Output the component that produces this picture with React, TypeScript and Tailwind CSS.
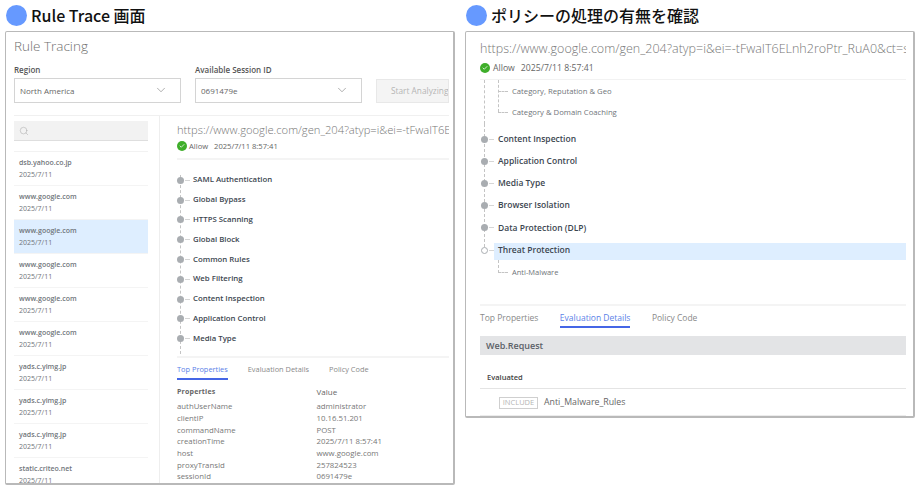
import React from 'react';
import { ChevronDown, Search, Check } from 'lucide-react';

const sessions = [
  { host: 'dsb.yahoo.co.jp' },
  { host: 'www.google.com' },
  { host: 'www.google.com', active: true },
  { host: 'www.google.com' },
  { host: 'www.google.com' },
  { host: 'www.google.com' },
  { host: 'yads.c.yimg.jp' },
  { host: 'yads.c.yimg.jp' },
  { host: 'yads.c.yimg.jp' },
  { host: 'static.criteo.net' },
];

const leftRules = ['SAML Authentication', 'Global Bypass', 'HTTPS Scanning', 'Global Block', 'Common Rules', 'Web Filtering', 'Content Inspection', 'Application Control', 'Media Type'];
const rightRules = ['Content Inspection', 'Application Control', 'Media Type', 'Browser Isolation', 'Data Protection (DLP)'];

const properties = [
  ['authUserName', 'administrator'],
  ['clientIP', '10.16.51.201'],
  ['commandName', 'POST'],
  ['creationTime', '2025/7/11 8:57:41'],
  ['host', 'www.google.com'],
  ['proxyTransId', '257824523'],
  ['sessionId', '0691479e'],
];

const Heading = ({ title }: { title: string }) => (
  <div className="h-[31px] flex items-center gap-[4px] pl-[1px] pb-[1px]">
    <div className="w-[21px] h-[21px] rounded-full bg-[#6699ff]" />
    <h2 className="text-[16px] leading-[22px] font-medium text-[#111] font-['Noto_Sans_CJK_JP',sans-serif]">{title}</h2>
  </div>
);

const SelectBox = ({ label, value }: { label: string; value: string }) => (
  <div className="w-[167px]">
    <div className="h-[16px] text-[8px] leading-[15px] font-semibold text-[#555]">{label}</div>
    <div className="h-[25px] border border-[#d4d4d4] flex items-center justify-between pl-[5px] pr-[12px] text-[8px] text-[#666]">
      {value}
      <ChevronDown size={14} strokeWidth={0.9} className="text-[#666] mb-[2px]" />
    </div>
  </div>
);

const Status = ({ small }: { small?: boolean }) => (
  <div className={`flex items-center text-[#666] leading-none ${small ? 'text-[7.6px]' : 'text-[8.7px]'}`}>
    <span className={`w-[10px] h-[10px] rounded-full bg-[#3fae2a] flex items-center justify-center ${small ? 'mr-[2px]' : 'mr-[3px]'}`}>
      <Check size={6} strokeWidth={3} className="text-white" />
    </span>
    <span>Allow</span>
    <span className="ml-[6px]">2025/7/11 8:57:41</span>
  </div>
);

const Rule = ({ name, hollow, small }: { name: string; hollow?: boolean; small?: boolean }) => (
  <div className="flex items-center h-full">
    <span className={`w-[7px] h-[7px] rounded-full shrink-0 relative z-10 ${hollow ? 'bg-white border border-[#a9adb1]' : 'bg-[#a9adb1]'}`} />
    <span className="w-[5px] ml-[1px] shrink-0 border-t border-dashed border-[#d6d6d6]" />
    <span className={`font-semibold text-[#3c4650] whitespace-nowrap ${small ? 'text-[7.8px] ml-[3px]' : 'text-[8.5px] ml-[4px]'}`}>{name}</span>
  </div>
);

const Tabs = ({ active, small }: { active: string; small?: boolean }) => (
  <div className={`flex text-[#8a8a8a] ${small ? 'gap-[20px] text-[7.4px]' : 'gap-[21.5px] text-[8.5px]'}`}>
    {['Top Properties', 'Evaluation Details', 'Policy Code'].map(t => (
      <div key={t} className={`h-[17px] leading-[13px] ${t === active ? 'text-[#5b7fe8] border-b-2 border-[#4566e6]' : ''}`}>{t}</div>
    ))}
  </div>
);

const App: React.FC = () => {
  return (
    <div className="w-[920px] h-[490px] bg-white flex gap-[10px] pl-[5px] overflow-hidden font-['Open_Sans',sans-serif]">
      <div className="w-[450px]">
        <Heading title="Rule Trace 画面" />
        <div className="h-[454px] border border-[#b9b9b9] border-b-2 border-r-2 rounded-[2px] pl-[8px] pr-[4px] overflow-hidden flex flex-col">
          <div className="h-[28px] pt-[2px] text-[13.5px] leading-[24px] font-light text-[#6f6f6f]">Rule Tracing</div>
          <div className="flex gap-[14px] items-end mt-[2px]">
            <SelectBox label="Region" value="North America" />
            <SelectBox label="Available Session ID" value="0691479e" />
            <div className="w-[73px] h-[24px] shrink-0 bg-[#f4f4f4] border border-[#e8e8e8] pl-[14px] flex items-center text-[8.3px] text-[#b4b4b4] whitespace-nowrap overflow-hidden">Start Analyzing</div>
          </div>
          <div className="flex-1 min-h-0 flex mt-[12px] border-t border-[#f0f0f0]">
            <div className="w-[146px] shrink-0 border-r border-[#eeeeee] pr-[11px] pt-[5px] overflow-hidden">
              <div className="h-[20px] bg-[#f2f2f2] border-b border-[#dedede] flex items-center pl-[5px]">
                <Search size={10} strokeWidth={1} className="text-[#9a9a9a]" />
              </div>
              <div className="mt-[10px] border-t border-[#f2f2f2]">
                {sessions.map((s, i) => (
                  <div key={i} className={`h-[34px] pl-[5px] pt-[5px] border-b border-[#f4f4f4] ${s.active ? 'bg-[#deeeff]' : ''}`}>
                    <div className="text-[7px] leading-[12px] font-semibold text-[#70757a]">{s.host}</div>
                    <div className="text-[7px] leading-[12px] text-[#70757a]">2025/7/11</div>
                  </div>
                ))}
              </div>
            </div>
            <div className="flex-1 min-w-0 pl-[17px] overflow-hidden flex flex-col">
              <div className="mt-[4px] h-[20px] text-[11.2px] leading-[20px] font-light text-[#777] whitespace-nowrap overflow-hidden">https://www.google.com/gen_204?atyp=i&amp;ei=-tFwaIT6ELnh2roPtr_RuA0&amp;ct=slh</div>
              <div className="mt-[3px]"><Status small /></div>
              <div className="mt-[7px] h-[2px] bg-[#f4f4f4] shrink-0" />
              <div className="relative mt-[10px] h-[186px] shrink-0">
                <div className="absolute left-[3px] top-[5px] bottom-[2px] border-l border-dashed border-[#c4c4c4]" />
                {leftRules.map(r => (
                  <div key={r} className="h-[19.8px]"><Rule name={r} small /></div>
                ))}
              </div>
              <div className="h-[2px] bg-[#f4f4f4] shrink-0" />
              <div className="mt-[5px]"><Tabs active="Top Properties" small /></div>
              <div className="flex items-center h-[15px] mt-[5px] text-[#666]">
                <div className="w-[139.5px] text-[7px] font-bold tracking-[0.2px]">Properties</div>
                <div className="text-[8px]">Value</div>
              </div>
              <div className="mt-[2px]">
                {properties.map(([k, v]) => (
                  <div key={k} className="flex h-[11.7px] items-center text-[7.8px] text-[#777]">
                    <div className="w-[139.5px]">{k}</div>
                    <div>{v}</div>
                  </div>
                ))}
              </div>
            </div>
          </div>
        </div>
      </div>

      <div className="w-[450px]">
        <Heading title="ポリシーの処理の有無を確認" />
        <div className="h-[387px] border border-[#b9b9b9] border-b-2 border-r-2 rounded-[2px] pl-[14px] pr-[7px] overflow-hidden flex flex-col">
          <div className="mt-[6px] h-[22px] text-[12.5px] leading-[22px] font-light text-[#777] whitespace-nowrap overflow-hidden">https://www.google.com/gen_204?atyp=i&amp;ei=-tFwaIT6ELnh2roPtr_RuA0&amp;ct=slh</div>
          <div className="mt-[4px]"><Status /></div>
          <div className="mt-[6px] h-[1px] bg-[#f2f2f2] shrink-0" />
          <div className="relative h-[44px] shrink-0">
            <div className="absolute left-[4px] top-0 bottom-0 border-l border-dashed border-[#c4c4c4]" />
            <div className="absolute left-[18px] top-0 h-[32px] border-l border-dashed border-[#c4c4c4]" />
            <div className="ml-[18px] flex items-center h-[21px] pt-[2px]">
              <span className="w-[10px] border-t border-dashed border-[#c4c4c4] mr-[4px]" />
              <span className="text-[7.7px] text-[#70757a]">Category, Reputation &amp; Geo</span>
            </div>
            <div className="ml-[18px] mt-[1px] flex items-center h-[21px]">
              <span className="w-[10px] border-t border-dashed border-[#c4c4c4] mr-[4px]" />
              <span className="text-[7.7px] text-[#70757a]">Category &amp; Domain Coaching</span>
            </div>
          </div>
          <div className="relative">
            <div className="absolute left-[4px] top-0 bottom-[8px] border-l border-dashed border-[#c4c4c4]" />
            <div className="h-[4px]" />
            {rightRules.map(r => (
              <div key={r} className="h-[22.2px] pl-[1px]"><Rule name={r} /></div>
            ))}
            <div className="h-[17px] mt-[4px] flex items-start pl-[1px] relative">
              <span className="absolute left-[14px] right-0 top-0 bottom-0 bg-[#deeeff]" />
              <div className="relative h-[15px]"><Rule name="Threat Protection" hollow /></div>
            </div>
          </div>
          <div className="relative h-[44px] shrink-0">
            <div className="absolute left-[18px] top-0 h-[13px] border-l border-dashed border-[#c4c4c4]" />
            <div className="ml-[18px] flex items-center h-[25px]">
              <span className="w-[10px] border-t border-dashed border-[#c4c4c4] mr-[4px]" />
              <span className="text-[7.5px] text-[#70757a]">Anti-Malware</span>
            </div>
          </div>
          <div className="h-[2px] bg-[#f4f4f4] shrink-0" />
          <div className="mt-[5px]"><Tabs active="Evaluation Details" /></div>
          <div className="mt-[8px] h-[19px] bg-[#e3e4e6] pl-[6px] flex items-center text-[9px] font-semibold text-[#5b6066] shrink-0">Web.Request</div>
          <div className="h-[34px] flex items-center pl-[7px] pt-[12px] text-[7.5px] font-semibold text-[#444] border-b border-[#e4e4e4] shrink-0">Evaluated</div>
          <div className="h-[27px] flex items-center pl-[19px] pt-[2px] border-b border-[#ececec] shrink-0">
            <span className="h-[12.5px] w-[39px] border border-[#cfcfcf] flex items-center justify-center text-[7.5px] text-[#b5b5b5]">INCLUDE</span>
            <span className="ml-[6px] text-[8.8px] text-[#666]">Anti_Malware_Rules</span>
          </div>
        </div>
      </div>
    </div>
  );
};

export default App;
